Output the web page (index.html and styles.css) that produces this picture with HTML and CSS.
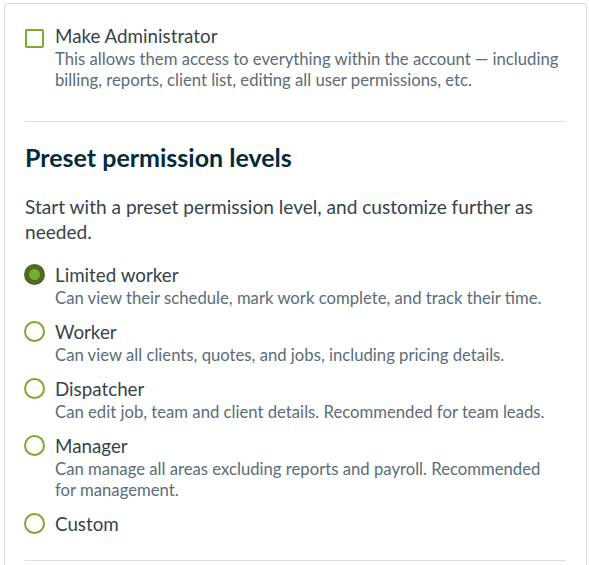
FILE: index.html
```html
<!DOCTYPE html>
<html lang="en">
<head>
  <meta charset="UTF-8">
  <meta name="viewport" content="width=device-width, initial-scale=1.0">
  <title>Permissions</title>
  <link rel="stylesheet" href="styles.css">
</head>
<body>
  <div class="card">
    <!-- Admin toggle -->
    <label class="option">
      <span class="checkbox"></span>
      <span class="option-text">
        <span class="option-title">Make Administrator</span>
        <span class="option-desc">This allows them access to everything within the account — including billing, reports, client list, editing all user permissions, etc.</span>
      </span>
    </label>

    <hr class="divider">

    <h2 class="heading">Preset permission levels</h2>
    <p class="intro">Start with a preset permission level, and customize further as needed.</p>

    <div class="levels">
      <label class="option">
        <span class="radio checked"></span>
        <span class="option-text">
          <span class="option-title">Limited worker</span>
          <span class="option-desc">Can view their schedule, mark work complete, and track their time.</span>
        </span>
      </label>
      <label class="option">
        <span class="radio"></span>
        <span class="option-text">
          <span class="option-title">Worker</span>
          <span class="option-desc">Can view all clients, quotes, and jobs, including pricing details.</span>
        </span>
      </label>
      <label class="option">
        <span class="radio"></span>
        <span class="option-text">
          <span class="option-title">Dispatcher</span>
          <span class="option-desc">Can edit job, team and client details. Recommended for team leads.</span>
        </span>
      </label>
      <label class="option">
        <span class="radio"></span>
        <span class="option-text">
          <span class="option-title">Manager</span>
          <span class="option-desc">Can manage all areas excluding reports and payroll. Recommended for management.</span>
        </span>
      </label>
      <label class="option">
        <span class="radio"></span>
        <span class="option-text">
          <span class="option-title">Custom</span>
        </span>
      </label>
    </div>

    <hr class="divider bottom">
  </div>
</body>
</html>
```

FILE: styles.css
```css
html, body {
  margin: 0;
  padding: 0;
  background: white;
  font-family: Lato, "Noto Sans", sans-serif;
  color: #424e56;
  overflow: hidden;
}
.card {
  margin: 3px 2px 0 4px;
  border: 1px solid #dcdcdc;
  border-bottom: none;
  border-radius: 4px 4px 0 0;
  padding: 20px 20px 0;
  height: 562px;
  box-sizing: border-box;
}
.option {
  display: flex;
  align-items: flex-start;
  gap: 11px;
  cursor: pointer;
}
.levels .option {
  gap: 10px;
}
.checkbox {
  width: 15px;
  height: 15px;
  border: 2px solid #7aab2e;
  border-radius: 2px;
  margin-top: 5px;
  flex-shrink: 0;
}
.option-text {
  display: flex;
  flex-direction: column;
}
.levels .option-text {
  padding-right: 8px;
}
.option-title {
  font-size: 18.8px;
  line-height: 24px;
  color: #37434b;
}
.option-desc {
  font-size: 16.7px;
  line-height: 21px;
  color: #5b6d78;
  margin-top: 1px;
}
.divider {
  border: none;
  border-top: 1px solid #e0e0e0;
  margin: 30px 0 0;
}
.heading {
  font-size: 25px;
  font-weight: bold;
  color: #032b3a;
  margin: 20px 0 0;
  line-height: 30px;
}
.intro {
  font-size: 19.1px;
  line-height: 25px;
  color: #37434b;
  margin: 22px 0 0;
}
.levels {
  display: flex;
  flex-direction: column;
  gap: 11px;
  margin-top: 19px;
}
.radio {
  width: 17px;
  height: 17px;
  border: 2px solid #7aab2e;
  border-radius: 50%;
  margin: 1px 0 0 -1px;
  flex-shrink: 0;
  box-sizing: content-box;
}
.radio.checked {
  border: 5px solid #4c6b1f;
  width: 11px;
  height: 11px;
  background: #7aab2e;
}
.divider.bottom {
  margin-top: 24px;
}
```
